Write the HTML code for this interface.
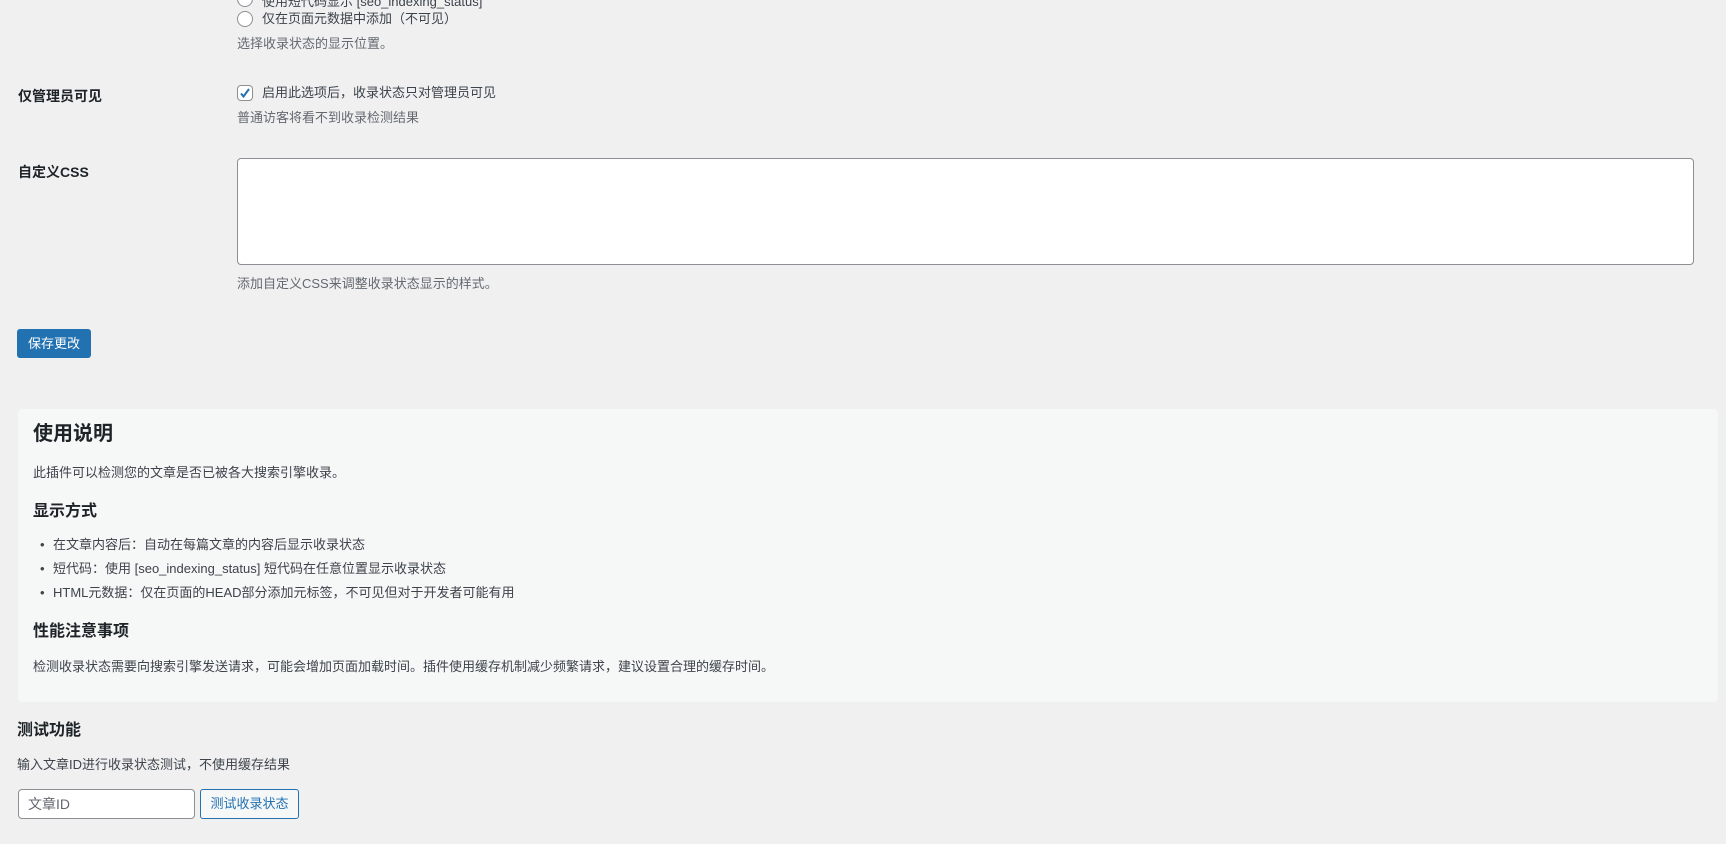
<!DOCTYPE html>
<html><head><meta charset="utf-8"><style>
*{box-sizing:border-box}
body{margin:0;width:1726px;height:844px;overflow:hidden;background:#f0f0f1;font-family:"Liberation Sans","Noto Sans CJK SC",sans-serif;font-size:13px;color:#3c434a;position:relative}
.a{position:absolute;white-space:nowrap;line-height:1}
.d{color:#646970}
.lbl{font-weight:bold;font-size:14px;color:#1d2327}
.radio{position:absolute;width:16px;height:16px;border:1px solid #8c8f94;border-radius:50%;background:#fff}
</style></head><body>
<div class="radio" style="left:237px;top:-9px"></div>
<div class="a" style="left:262px;top:-5px">使用短代码显示 [seo_indexing_status]</div>
<div class="radio" style="left:237px;top:11px"></div>
<div class="a" style="left:262px;top:12px">仅在页面元数据中添加（不可见）</div>
<div class="a d" style="left:237px;top:37px">选择收录状态的显示位置。</div>

<div class="a lbl" style="left:18px;top:89px">仅管理员可见</div>
<div style="position:absolute;left:237px;top:85px;width:16px;height:16px;border:1px solid #8c8f94;border-radius:4px;background:#fff">
<svg width="14" height="14" viewBox="0 0 14 14" style="position:absolute;left:0;top:0"><path d="M3 7.5l2.5 3L11 3" stroke="#2271b1" stroke-width="2" fill="none"/></svg></div>
<div class="a" style="left:262px;top:86px">启用此选项后，收录状态只对管理员可见</div>
<div class="a d" style="left:237px;top:111px">普通访客将看不到收录检测结果</div>

<div class="a lbl" style="left:18px;top:165px">自定义CSS</div>
<div style="position:absolute;left:237px;top:158px;width:1457px;height:107px;background:#fff;border:1px solid #8c8f94;border-radius:4px"></div>
<div class="a d" style="left:237px;top:277px">添加自定义CSS来调整收录状态显示的样式。</div>

<div style="position:absolute;left:17px;top:329px;width:74px;height:29px;background:#2271b1;border-radius:3px;color:#fff;text-align:center;line-height:29px">保存更改</div>

<div style="position:absolute;left:18px;top:409px;width:1700px;height:293px;background:#f6f7f7;border-radius:4px"></div>
<div class="a" style="left:33px;top:424px;font-size:20px;font-weight:bold;color:#1d2327">使用说明</div>
<div class="a" style="left:33px;top:466px">此插件可以检测您的文章是否已被各大搜索引擎收录。</div>
<div class="a" style="left:33px;top:504px;font-size:16px;font-weight:bold;color:#1d2327">显示方式</div>
<div class="a" style="left:40px;top:538px">•</div><div class="a" style="left:53px;top:538px">在文章内容后：自动在每篇文章的内容后显示收录状态</div>
<div class="a" style="left:40px;top:562px">•</div><div class="a" style="left:53px;top:562px">短代码：使用 [seo_indexing_status] 短代码在任意位置显示收录状态</div>
<div class="a" style="left:40px;top:586px">•</div><div class="a" style="left:53px;top:586px">HTML元数据：仅在页面的HEAD部分添加元标签，不可见但对于开发者可能有用</div>
<div class="a" style="left:33px;top:624px;font-size:16px;font-weight:bold;color:#1d2327">性能注意事项</div>
<div class="a" style="left:33px;top:660px">检测收录状态需要向搜索引擎发送请求，可能会增加页面加载时间。插件使用缓存机制减少频繁请求，建议设置合理的缓存时间。</div>

<div class="a" style="left:17px;top:723px;font-size:16px;font-weight:bold;color:#1d2327">测试功能</div>
<div class="a" style="left:17px;top:758px">输入文章ID进行收录状态测试，不使用缓存结果</div>
<div style="position:absolute;left:18px;top:789px;width:177px;height:30px;background:#fff;border:1px solid #8c8f94;border-radius:4px;padding-left:9px;line-height:28px;color:#646970;font-size:14px">文章ID</div>
<div style="position:absolute;left:200px;top:789px;width:99px;height:30px;background:#f6f7f7;border:1px solid #2271b1;border-radius:3px;color:#2271b1;text-align:center;line-height:28px">测试收录状态</div>
</body></html>
